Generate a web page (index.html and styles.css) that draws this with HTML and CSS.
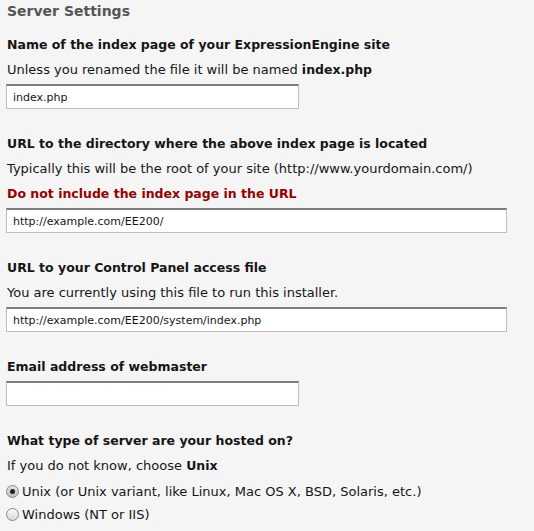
FILE: index.html
```html
<!DOCTYPE html>
<html>
<head>
<meta charset="utf-8">
<link rel="stylesheet" href="styles.css">
</head>
<body>
<div class="page">
  <h2 class="title">Server Settings</h2>

  <div class="field">
    <p class="label">Name of the index page of your ExpressionEngine site</p>
    <p class="note">Unless you renamed the file it will be named <b>index.php</b></p>
    <input class="text short" type="text" value="index.php">
  </div>

  <div class="field">
    <p class="label">URL to the directory where the above index page is located</p>
    <p class="note">Typically this will be the root of your site (http://www.yourdomain.com/)</p>
    <p class="warn">Do not include the index page in the URL</p>
    <input class="text long" type="text" value="http://example.com/EE200/">
  </div>

  <div class="field">
    <p class="label">URL to your Control Panel access file</p>
    <p class="note">You are currently using this file to run this installer.</p>
    <input class="text long" type="text" value="http://example.com/EE200/system/index.php">
  </div>

  <div class="field">
    <p class="label">Email address of webmaster</p>
    <input class="text short" type="text" value="">
  </div>

  <div class="field">
    <p class="label">What type of server are your hosted on?</p>
    <p class="note">If you do not know, choose <b>Unix</b></p>
    <label class="radio first"><input type="radio" name="os" checked><span>Unix (or Unix variant, like Linux, Mac OS X, BSD, Solaris, etc.)</span></label>
    <label class="radio"><input type="radio" name="os"><span>Windows (NT or IIS)</span></label>
  </div>
</div>
</body>
</html>
```
FILE: styles.css
```css
html, body {
  margin: 0;
  padding: 0;
  background: #f5f5f5;
}
body {
  font-family: "DejaVu Sans", Verdana, sans-serif;
  font-size: 13px;
  color: #151515;
}
.page {
  padding: 0 0 0 7px;
}
.title {
  margin: 0;
  font-size: 14px;
  line-height: 22px;
  color: #555;
  font-weight: bold;
}
.field {
  padding-top: 10px;
  display: flex;
  flex-direction: column;
  align-items: flex-start;
}
.field + .field {
  padding-top: 22px;
}
.field p {
  margin: 0;
  line-height: 25px;
}
.label {
  font-weight: bold;
  font-size: 12.5px;
}
.note b {
  font-size: 12.5px;
}
.warn {
  color: #990000;
  font-weight: bold;
  font-size: 12.5px;
}
.text {
  box-sizing: border-box;
  height: 25px;
  margin: 2px 0 0 -1px;
  padding: 0 6px;
  font-family: "DejaVu Sans", sans-serif;
  font-size: 11px;
  color: #151515;
  background: #fff;
  border: 1px solid #bdbdbd;
  border-top: 2px solid #7d7d7d;
  outline: none;
}
.short { width: 293px; }
.long { width: 501px; }
.radio {
  display: flex;
  align-items: center;
  height: 23px;
}
.radio.first {
  margin-top: 2px;
}
.radio input {
  appearance: none;
  -webkit-appearance: none;
  margin: 0 3px 0 -1px;
  width: 13px;
  height: 13px;
  border-radius: 50%;
  border: 1px solid #8a8a8a;
  background: linear-gradient(#fafafa, #d8d8d8);
  box-sizing: border-box;
  display: flex;
  align-items: center;
  justify-content: center;
}
.radio input:checked {
  background: linear-gradient(#e6e6e6, #bcbcbc);
}
.radio input:checked::after {
  content: "";
  width: 5px;
  height: 5px;
  border-radius: 50%;
  background: #222;
}
```
